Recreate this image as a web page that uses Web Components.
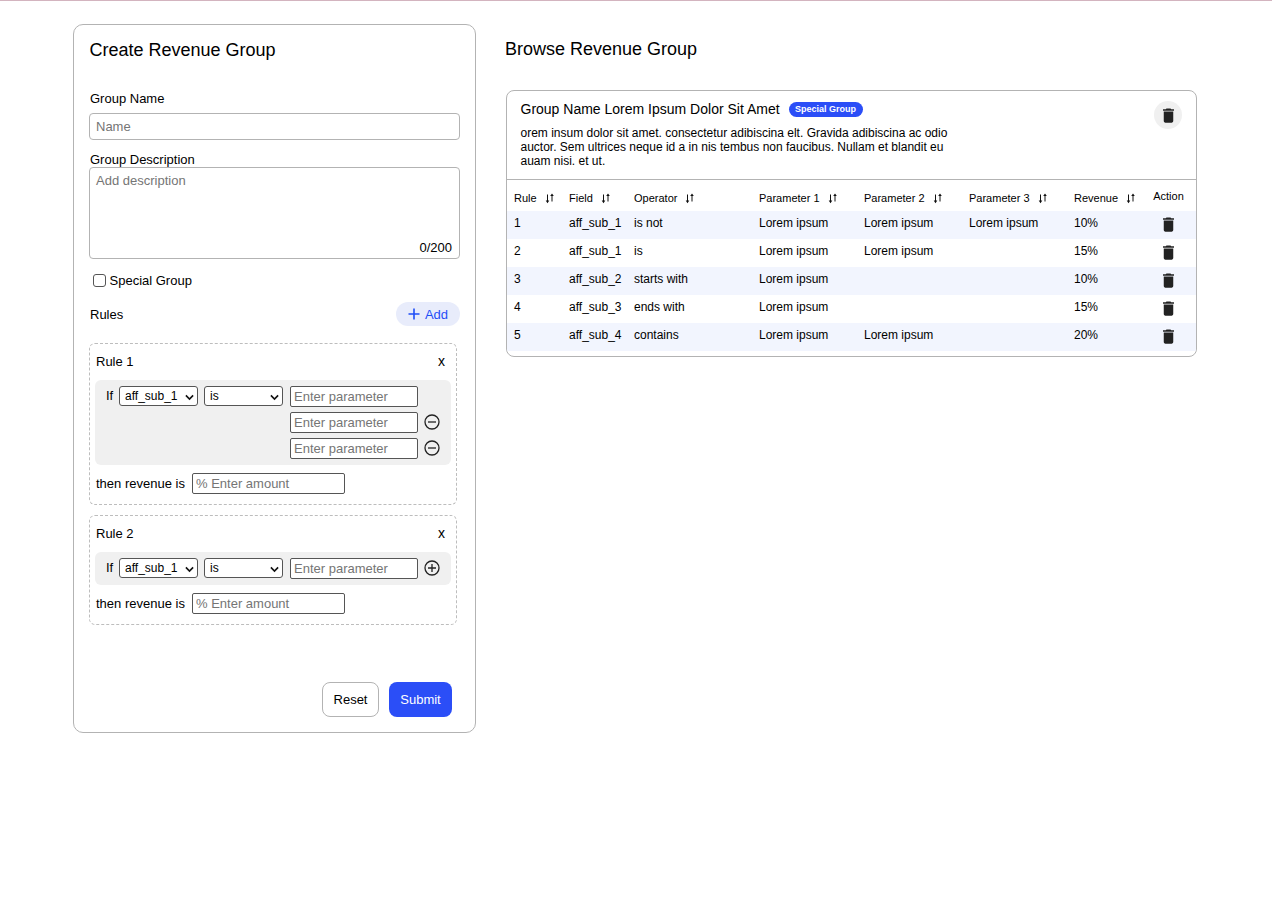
<!DOCTYPE html>
<html>
<head>
<meta charset="utf-8">
<title>Revenue Group</title>
<style>
html, body { margin: 0; background: #fff; }
body { font-family: "Liberation Sans", Arial, sans-serif; color: #000; }
</style>
</head>
<body>
<revenue-page>
  <revenue-form slot="left">
    <rule-card heading="Rule 1" params="3"></rule-card>
    <rule-card heading="Rule 2" params="1"></rule-card>
  </revenue-form>
  <revenue-browse slot="right">
    <group-card name="Group Name Lorem Ipsum Dolor Sit Amet" badge="Special Group">
      orem insum dolor sit amet. consectetur adibiscina elt. Gravida adibiscina ac odio auctor. Sem ultrices neque id a in nis tembus non faucibus. Nullam et blandit eu auam nisi. et ut.
    </group-card>
  </revenue-browse>
</revenue-page>

<script>
const icons = {
  trash: `<svg viewBox="0 0 24 24" fill="#222"><path d="M6 19c0 1.1.9 2 2 2h8c1.1 0 2-.9 2-2V7H6v12zM19 4h-3.5l-1-1h-5l-1 1H5v2h14V4z"/></svg>`,
  sort: `<svg viewBox="0 0 11 11" fill="none" stroke="#111" stroke-width="1"><path d="M2.5 1.5v6.5M7 8.5V2"/><path fill="#111" stroke="none" d="M.7 7.4h3.6L2.5 10.2zM5.2 2.9h3.6L7 .4z"/></svg>`,
  minus: `<svg viewBox="0 0 16 16" fill="none" stroke="#222" stroke-width="1.3"><circle cx="8" cy="8" r="7"/><path d="M4 8h8"/></svg>`,
  plus: `<svg viewBox="0 0 16 16" fill="none" stroke="#222" stroke-width="1.3"><circle cx="8" cy="8" r="7"/><path d="M4 8h8M8 4v8"/></svg>`,
  chevron: `<svg viewBox="0 0 10 7" fill="none" stroke="#111" stroke-width="1.8"><path d="M1 1.2 5 5.2 9 1.2"/></svg>`
};

class RgIcon extends HTMLElement {
  constructor() {
    super();
    this.attachShadow({mode: 'open'});
  }
  connectedCallback() {
    const size = this.getAttribute('size') || 16;
    this.shadowRoot.innerHTML = `<style>
      :host{display:inline-flex;width:${size}px;height:${size}px;flex:none;vertical-align:top;}
      svg{width:100%;height:100%;display:block;}
    </style>${icons[this.getAttribute('name')]}`;
  }
}
customElements.define('rg-icon', RgIcon);

const pageTemplate = document.createElement('template');
pageTemplate.innerHTML = `
<style>
:host{display:block;border-top:1px solid #d3b4bf;}
.page{display:flex;align-items:flex-start;padding:23px 0 0 73px;gap:29px;}
</style>
<div class="page">
  <slot name="left"></slot>
  <slot name="right"></slot>
</div>`;

class RevenuePage extends HTMLElement {
  constructor() {
    super();
    this.attachShadow({mode: 'open'});
    this.shadowRoot.appendChild(pageTemplate.content.cloneNode(true));
  }
}
customElements.define('revenue-page', RevenuePage);

const formTemplate = document.createElement('template');
formTemplate.innerHTML = `
<style>
:host{display:block;width:403px;box-sizing:border-box;border:1px solid #b3b3b3;border-radius:10px;padding:15px 15px 15px;font-size:13px;}
*{box-sizing:border-box;}
h2{margin:0 0 0 .5px;font-size:18px;font-weight:400;line-height:21px;}
label{display:block;line-height:15px;padding-left:1px;}
.name-label{margin-top:30px;}
input,textarea{font-family:inherit;font-size:13px;color:#000;outline:none;}
input::placeholder,textarea::placeholder{color:#757575;opacity:1;}
.name{display:block;width:371px;height:27px;margin-top:7px;padding:0 6px;border:1px solid #b3b3b3;border-radius:4px;}
.desc-label{margin-top:12px;}
.desc{position:relative;height:92px;}
textarea{display:block;width:371px;height:92px;padding:5px 6px;border:1px solid #b3b3b3;border-radius:4px;resize:none;line-height:15px;}
.count{position:absolute;right:8px;bottom:4px;line-height:15px;}
.special{display:flex;align-items:center;margin:15px 0 0 4px;height:13px;line-height:15px;padding-left:0;}
.special input{appearance:none;width:13px;height:13px;margin:0 3.5px 0 0;background:#fff;border:1px solid #555;border-radius:3px;}
.rules{display:flex;justify-content:space-between;align-items:center;margin-top:15px;height:24px;}
.rules span{padding-left:1px;}
.add{display:flex;align-items:center;justify-content:center;gap:5px;width:64px;height:24px;padding:0;border:0;border-radius:12px;background:#e8ecfb;color:#1f4ef7;font:13px "Liberation Sans",Arial,sans-serif;}
.add svg{width:12px;height:12px;display:block;margin-top:-1px;}
.list{display:flex;flex-direction:column;gap:10px;width:368px;margin-top:17px;}
.actions{display:flex;justify-content:flex-end;gap:10px;margin:57px 8px 0 0;}
button.btn{height:35px;border-radius:8px;font:13px "Liberation Sans",Arial,sans-serif;}
.reset{width:57px;background:#fff;border:1px solid #b3b3b3;color:#000;}
.submit{width:63px;background:#2b4ef7;border:0;color:#fff;}
</style>
<h2>Create Revenue Group</h2>
<label class="name-label">Group Name</label>
<input class="name" placeholder="Name">
<label class="desc-label">Group Description</label>
<div class="desc">
  <textarea placeholder="Add description"></textarea>
  <span class="count">0/200</span>
</div>
<label class="special"><input type="checkbox">Special Group</label>
<div class="rules">
  <span>Rules</span>
  <button class="add"><svg viewBox="0 0 12 12" fill="none" stroke="#1f4ef7" stroke-width="1.6"><path d="M6 .5v11M.5 6h11"/></svg>Add</button>
</div>
<div class="list"><slot></slot></div>
<div class="actions">
  <button class="btn reset">Reset</button>
  <button class="btn submit">Submit</button>
</div>`;

class RevenueForm extends HTMLElement {
  constructor() {
    super();
    this.attachShadow({mode: 'open'});
    this.shadowRoot.appendChild(formTemplate.content.cloneNode(true));
  }
}
customElements.define('revenue-form', RevenueForm);

const ruleStyles = `
<style>
:host{display:block;box-sizing:border-box;width:368px;border:1px dashed #bdbdbd;border-radius:6px;padding:0 5px 10px;font-size:13px;}
*{box-sizing:border-box;}
.top{display:flex;justify-content:space-between;align-items:center;height:36px;padding:0 0 2px 1px;}
.top .x{margin-right:6px;font-size:14px;}
.panel{display:flex;align-items:flex-start;width:356px;padding:6px 0 6px 11px;background:#f0f0f0;border-radius:6px;}
.if{width:13px;line-height:20px;}
.pick{position:relative;display:block;width:79px;height:20px;margin-right:6px;}
select{appearance:none;display:block;width:79px;height:20px;padding:0 0 0 5px;background:#fff;border:1px solid #555;border-radius:3px;color:#000;font:12px "Liberation Sans",Arial,sans-serif;}
.pick rg-icon{position:absolute;right:4px;top:7px;}
.params{display:flex;flex-direction:column;gap:5px;margin-left:1px;}
.param{display:flex;align-items:center;gap:6px;height:21px;}
.param rg-icon{margin-top:-1px;}
input{width:128px;height:21px;padding:0 3px;background:#fff;border:1px solid #555;border-radius:2px;color:#000;font:13px "Liberation Sans",Arial,sans-serif;outline:none;}
input::placeholder{color:#757575;opacity:1;}
.then{display:flex;align-items:center;margin-top:8px;height:21px;padding-left:1px;}
.then span{width:96px;}
.then input{width:153px;}
</style>`;

class RuleCard extends HTMLElement {
  constructor() {
    super();
    this.attachShadow({mode: 'open'});
  }
  connectedCallback() {
    const count = Number(this.getAttribute('params'));
    let params = '';
    for (let i = 0; i < count; i++) {
      // first row of a single parameter gets the plus, extra rows get the minus
      let icon = '';
      if (i > 0) icon = '<rg-icon name="minus"></rg-icon>';
      if (count === 1) icon = '<rg-icon name="plus"></rg-icon>';
      params += `<div class="param"><input placeholder="Enter parameter">${icon}</div>`;
    }
    this.shadowRoot.innerHTML = `${ruleStyles}
      <div class="top"><span>${this.getAttribute('heading')}</span><span class="x">x</span></div>
      <div class="panel">
        <span class="if">If</span>
        <span class="pick"><select><option>aff_sub_1</option></select><rg-icon name="chevron" size="9"></rg-icon></span>
        <span class="pick"><select><option>is</option></select><rg-icon name="chevron" size="9"></rg-icon></span>
        <div class="params">${params}</div>
      </div>
      <div class="then"><span>then revenue is</span><input placeholder="% Enter amount"></div>`;
  }
}
customElements.define('rule-card', RuleCard);

const browseTemplate = document.createElement('template');
browseTemplate.innerHTML = `
<style>
:host{display:block;width:692px;}
h2{margin:15px 0 0;font-size:18px;font-weight:400;line-height:21px;}
.body{margin:30px 0 0 1px;}
</style>
<h2>Browse Revenue Group</h2>
<div class="body"><slot></slot></div>`;

class RevenueBrowse extends HTMLElement {
  constructor() {
    super();
    this.attachShadow({mode: 'open'});
    this.shadowRoot.appendChild(browseTemplate.content.cloneNode(true));
  }
}
customElements.define('revenue-browse', RevenueBrowse);

const rows = [
  ['1', 'aff_sub_1', 'is not', 'Lorem ipsum', 'Lorem ipsum', 'Lorem ipsum', '10%'],
  ['2', 'aff_sub_1', 'is', 'Lorem ipsum', 'Lorem ipsum', '', '15%'],
  ['3', 'aff_sub_2', 'starts with', 'Lorem ipsum', '', '', '10%'],
  ['4', 'aff_sub_3', 'ends with', 'Lorem ipsum', '', '', '15%'],
  ['5', 'aff_sub_4', 'contains', 'Lorem ipsum', 'Lorem ipsum', '', '20%']
];
const columns = [
  ['Rule', 55], ['Field', 65], ['Operator', 125], ['Parameter 1', 105],
  ['Parameter 2', 105], ['Parameter 3', 105], ['Revenue', 74]
];

class GroupCard extends HTMLElement {
  constructor() {
    super();
    this.attachShadow({mode: 'open'});
  }
  connectedCallback() {
    const cols = columns.map(c => `<col style="width:${c[1]}px">`).join('');
    const head = columns.map(c => `<th><span class="th">${c[0]}<rg-icon name="sort" size="11"></rg-icon></span></th>`).join('');
    const body = rows.map(r => `<tr>${r.map(v => `<td>${v}</td>`).join('')}<td class="act"><rg-icon name="trash" size="19"></rg-icon></td></tr>`).join('');
    this.shadowRoot.innerHTML = `
<style>
:host{display:block;box-sizing:border-box;width:691px;border:1px solid #b3b3b3;border-radius:8px;font-size:12px;overflow:hidden;}
*{box-sizing:border-box;}
.head{display:flex;justify-content:space-between;align-items:flex-start;height:89px;padding:10px 14px 0 13.5px;border-bottom:1px solid #b3b3b3;}
.title{display:flex;align-items:center;font-size:14px;line-height:16px;}
.badge{margin-left:9px;width:74px;height:15px;border-radius:8px;background:#2b4ef7;color:#fff;font-size:9px;font-weight:700;line-height:15px;text-align:center;}
.text{width:432px;margin-top:9px;line-height:14px;}
.del{display:flex;align-items:center;justify-content:center;width:28px;height:28px;border-radius:50%;background:#f0f0f0;}
table{table-layout:fixed;width:689px;border-collapse:collapse;margin-bottom:5px;}
th{height:31px;padding:11px 0 0 7px;vertical-align:top;text-align:left;font-size:11px;font-weight:400;line-height:14px;white-space:nowrap;}
th.action{padding:9px 0 0;text-align:center;}
.th{display:flex;align-items:center;gap:8px;}
td{height:28px;padding:5px 0 0 7px;vertical-align:top;line-height:14px;white-space:nowrap;}
td.act{padding:4px 0 0;text-align:center;}
tbody tr:nth-child(odd){background:#f2f5fe;}
</style>
<div class="head">
  <div>
    <div class="title"><span>${this.getAttribute('name')}</span><span class="badge">${this.getAttribute('badge')}</span></div>
    <div class="text"><slot></slot></div>
  </div>
  <span class="del"><rg-icon name="trash" size="19"></rg-icon></span>
</div>
<table>
  <colgroup>${cols}<col style="width:55px"></colgroup>
  <thead><tr>${head}<th class="action">Action</th></tr></thead>
  <tbody>${body}</tbody>
</table>`;
  }
}
customElements.define('group-card', GroupCard);
</script>
</body>
</html>
